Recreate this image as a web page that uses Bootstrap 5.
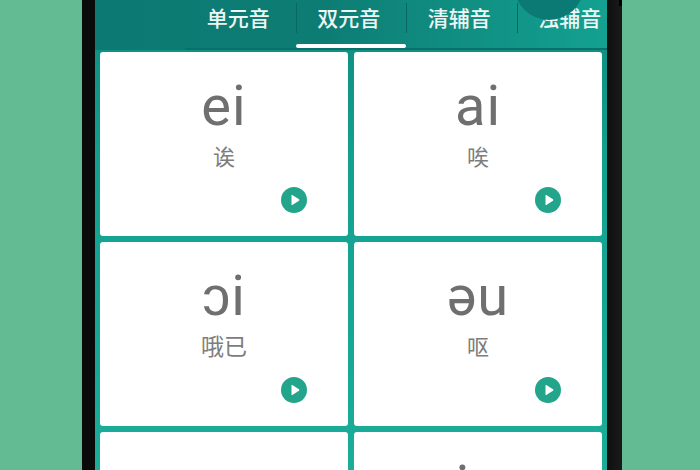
<!DOCTYPE html>
<html lang="zh">
<head>
<meta charset="utf-8">
<title>音标</title>
<link href="https://cdn.jsdelivr.net/npm/bootstrap@5.3.0/dist/css/bootstrap.min.css" rel="stylesheet">
<style>
html,body{height:470px;overflow:hidden}
body{background:#62bb93;font-family:"Roboto","Noto Sans CJK SC",sans-serif;padding-left:82px}
.phone-shell{width:540px;height:470px;background:linear-gradient(90deg,#0a0a0a 0,#0a0a0a 96%,#1a1a1a 100%);padding:0 15px 0 13px;position:relative}
.phone-screen{height:470px;background:linear-gradient(180deg,#0f8a80 0,#13a091 160px,#1bac9a 100%);overflow:hidden;position:relative}
.tab-head{height:50px;background:linear-gradient(90deg,#0c7a72 0%,#0d7d74 45%,#13a191 100%);padding-left:90px;color:#eef6f5;font:500 21px/1 "Noto Sans CJK SC",sans-serif}
.tab-cell{width:110.5px;height:50px;padding:0 4px 14px 0;position:relative;flex:none;border-bottom:2px solid #0b7068}
.tab-cell+.tab-cell::before{content:"";position:absolute;left:0;top:3px;height:30px;width:1px;background:#0b6660}
.tab-on::after{content:"";position:absolute;left:0;right:0;bottom:0;height:4px;border-radius:2px;background:#fff}
.head-blob{position:absolute;left:419px;top:-50px;width:70px;height:70px;border-radius:50%;background:#0c7a74}
.sound-grid{display:grid;grid-template-columns:248px 248px;gap:6px;padding:2px 0 0 5px}
.sound-card{height:184px;border:0;border-radius:3px;background:#fff;position:relative;color:#6f6f6f}
.sound-ipa{font:400 56px/1 "Roboto",sans-serif;margin-top:26px;height:53px;letter-spacing:1px}
.sound-zh{font:400 22px/1 "Noto Sans CJK SC",sans-serif;margin-top:13px;color:#7d7d7d}
.zh-wide{font-size:23px}
.play-dot{position:absolute;right:41px;bottom:23px;width:26px;height:26px}
.right-pin{position:absolute;right:0;top:0;width:3px;height:6px;background:#000}
</style>
</head>
<body>
<div class="phone-shell">
  <div class="right-pin"></div>
  <div class="phone-screen">
    <div class="tab-head d-flex">
      <div class="tab-cell d-flex align-items-center justify-content-center">单元音</div>
      <div class="tab-cell tab-on d-flex align-items-center justify-content-center">双元音</div>
      <div class="tab-cell d-flex align-items-center justify-content-center">清辅音</div>
      <div class="tab-cell d-flex align-items-center justify-content-center">浊辅音</div>
    </div>
    <div class="head-blob"></div>
    <div class="sound-grid">
      <div class="card sound-card text-center">
        <div class="sound-ipa">ei</div><div class="sound-zh">诶</div>
        <svg class="play-dot" viewBox="0 0 26 26"><circle cx="13" cy="13" r="13" fill="#22a58a"/><path d="M10.500 8.500Q10.500 7.600 11.300 8L18 12.300Q18.800 13 18 13.700L11.300 18Q10.500 18.400 10.500 17.500z" fill="#fff"/></svg>
      </div>
      <div class="card sound-card text-center">
        <div class="sound-ipa">ai</div><div class="sound-zh">唉</div>
        <svg class="play-dot" viewBox="0 0 26 26"><circle cx="13" cy="13" r="13" fill="#22a58a"/><path d="M10.500 8.500Q10.500 7.600 11.300 8L18 12.300Q18.800 13 18 13.700L11.300 18Q10.500 18.400 10.500 17.500z" fill="#fff"/></svg>
      </div>
      <div class="card sound-card text-center">
        <div class="sound-ipa">ɔi</div><div class="sound-zh zh-wide">哦已</div>
        <svg class="play-dot" viewBox="0 0 26 26"><circle cx="13" cy="13" r="13" fill="#22a58a"/><path d="M10.500 8.500Q10.500 7.600 11.300 8L18 12.300Q18.800 13 18 13.700L11.300 18Q10.500 18.400 10.500 17.500z" fill="#fff"/></svg>
      </div>
      <div class="card sound-card text-center">
        <div class="sound-ipa">əu</div><div class="sound-zh">呕</div>
        <svg class="play-dot" viewBox="0 0 26 26"><circle cx="13" cy="13" r="13" fill="#22a58a"/><path d="M10.500 8.500Q10.500 7.600 11.300 8L18 12.300Q18.800 13 18 13.700L11.300 18Q10.500 18.400 10.500 17.500z" fill="#fff"/></svg>
      </div>
      <div class="card sound-card text-center"><div class="sound-ipa">au</div></div>
      <div class="card sound-card text-center"><div class="sound-ipa">iə</div></div>
    </div>
  </div>
</div>
</body>
</html>
